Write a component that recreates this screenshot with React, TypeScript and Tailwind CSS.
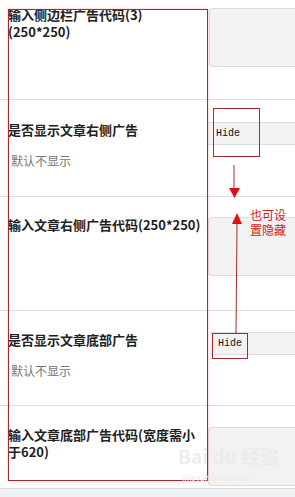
import React from 'react';

const cjk = { fontFamily: '"Noto Sans CJK SC", "Liberation Sans", sans-serif' };
const mono = { fontFamily: '"Liberation Mono", "DejaVu Sans Mono", monospace' };

const Label = ({ children }: any) => (
  <div className="text-[13px] leading-[17px] font-bold text-[#222]" style={cjk}>
    {children}
  </div>
);

const Hint = () => (
  <div className="mt-[15px] pl-[3px] text-[12px] leading-4 text-[#777]" style={cjk}>
    默认不显示
  </div>
);

const TextBox = ({ top }: any) => (
  <div
    className={`${top} h-[59px] rounded-l-sm border border-r-0 border-[#dcdcdc] bg-[#f2f2f2]`}
  />
);

const SelectBar = ({ top }: any) => (
  <div
    className={`${top} flex h-[23px] items-center border-y border-[#dcdcdc] bg-[#f2f2f2] pl-[8px] text-[10px] text-[#111]`}
    style={mono}
  >
    Hide
  </div>
);

const App = () => {
  return (
    <div className="relative h-[497px] w-[295px] overflow-hidden bg-white">
      {/* rows */}
      <div className="flex h-[100px] border-b border-[#dedede]">
        <div className="w-[208px] pl-2 pt-[6px]">
          <Label>输入侧边栏广告代码(3)</Label>
          <Label>(250*250)</Label>
        </div>
        <div className="flex-1 pl-[1px]">
          <TextBox top="mt-[8px]" />
        </div>
      </div>

      <div className="flex h-[97px] border-b border-[#dedede]">
        <div className="w-[208px] pl-2 pt-[21px]">
          <Label>是否显示文章右侧广告</Label>
          <Hint />
        </div>
        <div className="flex-1">
          <SelectBar top="mt-[22px]" />
        </div>
      </div>

      <div className="flex h-[114px] border-b border-[#dedede]">
        <div className="w-[208px] pl-2 pt-[19px]">
          <Label>输入文章右侧广告代码(250*250)</Label>
        </div>
        <div className="flex-1">
          <TextBox top="mt-[20px]" />
        </div>
      </div>

      <div className="flex h-[95px] border-b border-[#dedede]">
        <div className="w-[208px] pl-2 pt-[20px]">
          <Label>是否显示文章底部广告</Label>
          <Hint />
        </div>
        <div className="flex-1 pl-[2px]">
          <SelectBar top="mt-[21px]" />
        </div>
      </div>

      <div className="flex h-[83px] border-b border-[#dcdcdc]">
        <div className="w-[208px] pl-2 pt-[20px]">
          <Label>输入文章底部广告代码(宽度需小</Label>
          <Label>于620)</Label>
        </div>
        <div className="flex-1">
          <TextBox top="mt-[21px]" />
        </div>
      </div>

      <div className="h-[10px] bg-[#eef2f7]" />

      {/* annotations */}
      <div className="absolute left-[8px] top-[9px] h-[472px] w-[200px] border border-[#a52a2a] shadow-[0_0_2px_rgba(255,120,120,0.6)]" />
      <div className="absolute left-[213px] top-[108px] h-[49px] w-[47px] border border-[#a52a2a]" />
      <div className="absolute left-[212px] top-[333px] h-[26px] w-[36px] border border-[#a52a2a]" />

      <svg className="absolute left-0 top-0" width="295" height="497">
        <line x1="234" y1="165" x2="234" y2="190" stroke="#b03030" strokeWidth="1" />
        <polygon points="229,188 240,188 234.5,198" fill="#e01010" />
        <polygon points="237,213 232,224 242,224" fill="#e01010" />
        <line x1="237" y1="224" x2="236" y2="333" stroke="#a52a2a" strokeWidth="1" />
      </svg>

      <div
        className="absolute left-[250px] top-[207px] text-[12px] leading-[15px] text-[#d42020]"
        style={cjk}
      >
        <div>也可设</div>
        <div>置隐藏</div>
      </div>

      {/* watermark */}
      <div
        className="absolute left-[178px] top-[446px] text-[19px] font-bold leading-5 text-[#ececec]"
        style={cjk}
      >
        Bai du 经验
      </div>
      <div
        className="absolute left-[182px] top-[474px] text-[8px] leading-[8px] text-[#ececec]"
        style={cjk}
      >
        jingyan.baidu.com
      </div>
    </div>
  );
};

export default App;
